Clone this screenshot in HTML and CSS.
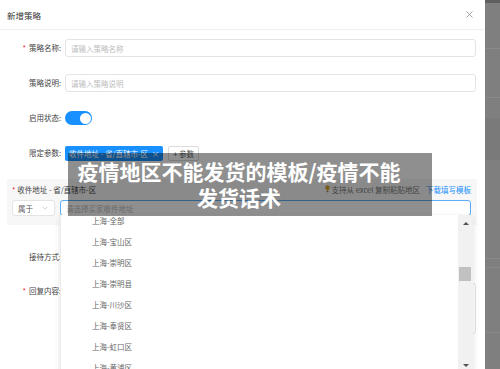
FILE: index.html
```html
<!DOCTYPE html>
<html lang="zh-CN">
  <head>
    <meta charset="UTF-8" />
    <meta name="viewport" content="width=device-width, initial-scale=1.0" />
    <title>新增策略</title>
    <link rel="stylesheet" href="styles.css">
  </head>
  <body>
    <div class="page">
      <div class="modal">
        <div class="modal-header">
          <span class="modal-title">新增策略</span>
          <svg class="close-icon" width="7" height="7" viewBox="0 0 7 7">
            <path d="M0.5 0.5 L6.5 6.5 M6.5 0.5 L0.5 6.5" stroke="#999" stroke-width="0.9" />
          </svg>
        </div>

        <div class="modal-body">
          <div class="form-row">
            <label class="form-label required">策略名称:</label>
            <input class="text-input" type="text" placeholder="请输入策略名称" />
          </div>
          <div class="form-row">
            <label class="form-label">策略说明:</label>
            <input class="text-input" type="text" placeholder="请输入策略说明" />
          </div>
          <div class="form-row">
            <label class="form-label">启用状态:</label>
            <span class="switch"><span class="switch-knob"></span></span>
          </div>
          <div class="form-row">
            <label class="form-label">限定参数:</label>
            <span class="param-tag">收件地址 - 省/直辖市-区 <span class="tag-close">×</span></span>
            <button type="button" class="param-btn">+ 参数</button>
          </div>

          <div class="param-box">
            <div class="param-head">
              <span class="param-name"><span class="star">*</span> 收件地址 - 省/直辖市-区</span>
              <span class="param-tip">
                <svg width="5" height="8" viewBox="0 0 5 8">
                  <path d="M2.5 0.3 C1.1 0.3 0.3 1.3 0.3 2.4 C0.3 3.4 1.2 4 1.5 5 L3.5 5 C3.8 4 4.7 3.4 4.7 2.4 C4.7 1.3 3.9 0.3 2.5 0.3 Z" fill="#d4a72c" />
                  <rect x="1.5" y="5.6" width="2" height="1.6" rx="0.4" fill="#9a8a50" />
                </svg>
                支持从 excel 复制粘贴地区
                <a class="tip-link">下载填写模板</a>
              </span>
            </div>
            <div class="param-inputs">
              <span class="op-select">属于
                <svg width="6" height="4" viewBox="0 0 6 4">
                  <path d="M0.5 0.7 L3 3.2 L5.5 0.7" fill="none" stroke="#bbb" stroke-width="0.7" />
                </svg>
              </span>
              <input class="area-input" type="text" placeholder="请选择买家收件地址" />
            </div>
          </div>

          <div class="form-row after-box">
            <label class="form-label">接待方式:</label>
          </div>
          <div class="form-row top-row">
            <label class="form-label required">回复内容:</label>
            <textarea class="reply-input"></textarea>
          </div>
        </div>

        <div class="area-dropdown">
          <ul class="area-list">
            <li>上海-全部</li>
            <li>上海-宝山区</li>
            <li>上海-崇明区</li>
            <li>上海-崇明县</li>
            <li>上海-川沙区</li>
            <li>上海-奉贤区</li>
            <li>上海-虹口区</li>
            <li>上海-黄浦区</li>
          </ul>
          <div class="scrollbar">
            <span class="arrow-up"></span>
            <span class="scroll-thumb"></span>
            <span class="arrow-down"></span>
          </div>
        </div>

        <div class="caption">疫情地区不能发货的模板/疫情不能<br />发货话术</div>
      </div>

      <div class="backdrop">
        <div class="bd-top"></div>
        <div class="bd-line l1"></div>
        <div class="bd-line l2"></div>
        <div class="bd-band"></div>
        <div class="bd-line l3"></div>
        <div class="bd-line l4"></div>
        <div class="bd-line l5"></div>
      </div>
    </div>
  </body>
</html>
```

FILE: styles.css
```css
body {
  margin: 0;
  width: 500px;
  height: 369px;
  overflow: hidden;
  font-family: "Noto Sans CJK SC", "Liberation Sans", sans-serif;
  color: #444;
  background-color: #7f7f7f;
}

.page {
  display: flex;
  height: 369px;
}

.modal {
  position: relative;
  width: 485px;
  flex: none;
  background-color: #fff;
}

.modal-header {
  height: 29px;
  border-bottom: 1px solid #f0f0f0;
  padding: 0 12px 0 7px;
  display: flex;
  align-items: center;
  justify-content: space-between;
}

.modal-title {
  font-size: 8.5px;
  color: #333;
}

.modal-body {
  padding-top: 9px;
}

.form-row {
  display: flex;
  align-items: center;
  height: 18px;
  margin-bottom: 17px;
}

.form-label {
  width: 61px;
  padding-right: 4px;
  flex: none;
  text-align: right;
  font-size: 7.5px;
  line-height: 18px;
  color: #444;
}

.form-label.required::before {
  content: "*";
  color: #f5222d;
  margin-right: 3px;
}

.text-input {
  width: 411px;
  height: 18px;
  box-sizing: border-box;
  border: 1px solid #e4e4e4;
  border-radius: 3px;
  padding: 0 5px;
  font-family: inherit;
  font-size: 7.5px;
  outline: none;
}

.text-input::placeholder,
.area-input::placeholder {
  color: #bdbdbd;
}

.switch {
  width: 27px;
  height: 14px;
  border-radius: 7px;
  background-color: #1890ff;
  display: flex;
  align-items: center;
  justify-content: flex-end;
  padding-right: 1.5px;
  box-sizing: border-box;
}

.switch-knob {
  width: 11px;
  height: 11px;
  border-radius: 50%;
  background-color: #fff;
}

.param-tag {
  height: 15px;
  line-height: 15px;
  padding: 0 4px;
  border-radius: 2px;
  background-color: #1890ff;
  color: #fff;
  font-size: 7.5px;
  white-space: nowrap;
}

.tag-close {
  margin-left: 2px;
}

.param-btn {
  margin-left: 5px;
  height: 15px;
  padding: 0 4px;
  border: 1px solid #dcdcdc;
  border-radius: 2px;
  background-color: #fff;
  color: #555;
  font-family: inherit;
  font-size: 7.5px;
  line-height: 13px;
}

.param-box {
  margin: 0 8px 0 7px;
  padding: 5px 6px 9px 5px;
  background-color: #f7f7f7;
}

.param-head {
  display: flex;
  justify-content: space-between;
  align-items: center;
  height: 10px;
  font-size: 7.5px;
}

.star {
  color: #f5222d;
}

.param-name {
  color: #444;
}

.param-tip {
  display: flex;
  align-items: center;
  gap: 2px;
  color: #777;
}

.tip-link {
  margin-left: 4px;
  color: #1890ff;
}

.param-inputs {
  display: flex;
  gap: 5px;
  margin-top: 6px;
}

.op-select {
  width: 43px;
  height: 16px;
  box-sizing: border-box;
  padding: 0 6px 0 5px;
  border: 1px solid #e4e4e4;
  border-radius: 3px;
  background-color: #fff;
  display: flex;
  align-items: center;
  justify-content: space-between;
  font-size: 7.5px;
  color: #555;
}

.area-input {
  width: 411px;
  height: 16px;
  box-sizing: border-box;
  border: 1px solid #5aaef5;
  border-radius: 3px;
  padding: 0 5px;
  font-family: inherit;
  font-size: 7.5px;
  outline: none;
}

.form-row.after-box {
  margin-top: 23px;
  margin-bottom: 16px;
}

.form-row.top-row {
  align-items: flex-start;
  height: auto;
}

.reply-input {
  width: 411px;
  height: 51px;
  margin-top: 1px;
  box-sizing: border-box;
  border: 1px solid #e4e4e4;
  border-radius: 3px;
  resize: none;
}

.area-dropdown {
  position: absolute;
  left: 60px;
  top: 215px;
  width: 412px;
  height: 156px;
  overflow: hidden;
  background-color: #fff;
  border-left: 1px solid #ececec;
  box-shadow: 0 2px 6px rgba(0, 0, 0, 0.12);
}

.area-list {
  list-style: none;
  margin: -5px 0 0;
  padding: 0 0 0 31px;
}

.area-list li {
  height: 21px;
  line-height: 21px;
  font-size: 7.5px;
  color: #666;
}

.scrollbar {
  position: absolute;
  top: 0;
  right: 0;
  width: 15px;
  height: 100%;
  background-color: #f1f1f1;
}

.arrow-up,
.arrow-down {
  position: absolute;
  left: 4.5px;
  width: 0;
  height: 0;
  border-left: 3px solid transparent;
  border-right: 3px solid transparent;
}

.arrow-up {
  top: 7px;
  border-bottom: 3px solid #505050;
}

.arrow-down {
  bottom: 4px;
  border-top: 3px solid #505050;
}

.scroll-thumb {
  position: absolute;
  top: 52px;
  left: 1px;
  right: 2px;
  height: 14px;
  background-color: #c1c1c1;
}

.caption {
  position: absolute;
  left: 68px;
  top: 153px;
  width: 364px;
  height: 63px;
  box-sizing: border-box;
  padding: 5px 30px 5px 8px;
  background-color: rgba(0, 0, 0, 0.44);
  color: #fff;
  font-size: 21px;
  font-weight: bold;
  line-height: 26px;
  text-align: center;
  white-space: nowrap;
}

.backdrop {
  position: relative;
  flex: 1;
  background-color: #7f7f7f;
}

.bd-top {
  height: 3px;
  background-color: #5f5f5f;
}

.bd-line {
  position: absolute;
  left: 0;
  right: 0;
  height: 1px;
  background-color: #8a8a8a;
}

.l1 { top: 48px; }
.l2 { top: 97px; }
.l3 { top: 258px; }
.l4 { top: 267px; }
.l5 { top: 332px; }

.bd-band {
  position: absolute;
  left: 0;
  right: 0;
  top: 118px;
  height: 42px;
  background-color: #7a7a7a;
}
```
